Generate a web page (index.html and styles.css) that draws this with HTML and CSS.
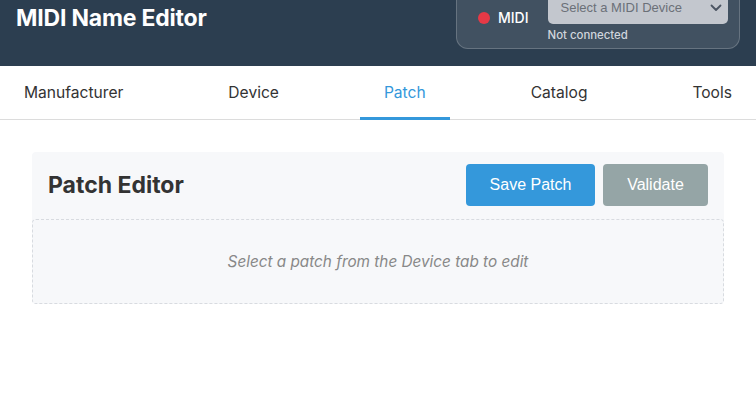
FILE: index.html
```html
<!DOCTYPE html>
<html>
<head>
<meta charset="utf-8">
<link rel="stylesheet" href="styles.css">
</head>
<body>
<header class="app-header">
  <h1 class="app-title">MIDI Name Editor</h1>
  <div class="midi-panel">
    <div class="midi-status">
      <span class="dot"></span>
      <span class="midi-label">MIDI</span>
    </div>
    <div class="midi-device">
      <div class="device-select">
        <span>Select a MIDI Device</span>
        <svg class="chev" width="12" height="8" viewBox="0 0 12 8"><path d="M1.5 1.5 L6 6 L10.5 1.5" fill="none" stroke="#4b5563" stroke-width="1.8" stroke-linecap="round" stroke-linejoin="round"/></svg>
      </div>
      <div class="conn">Not connected</div>
    </div>
  </div>
</header>
<nav class="tabs">
  <div class="tab">Manufacturer</div>
  <div class="tab">Device</div>
  <div class="tab active">Patch</div>
  <div class="tab">Catalog</div>
  <div class="tab">Tools</div>
</nav>
<main class="content">
  <section class="editor">
    <div class="editor-head">
      <h2 class="editor-title">Patch Editor</h2>
      <div class="actions">
        <button class="btn primary">Save Patch</button>
        <button class="btn secondary">Validate</button>
      </div>
    </div>
    <div class="empty">Select a patch from the Device tab to edit</div>
  </section>
</main>
</body>
</html>
```
FILE: styles.css
```css
* { box-sizing: border-box; }
body {
  margin: 0;
  font-family: Inter, "Noto Sans", sans-serif;
  color: #333;
  background: #fff;
  overflow: hidden;
}
.app-header {
  background: #2c3e50;
  height: 66px;
  display: flex;
  justify-content: space-between;
  align-items: flex-start;
  padding: 0 16px;
}
.app-title {
  margin: 0;
  color: #fff;
  font-size: 23px;
  font-weight: 700;
  line-height: 36px;
  letter-spacing: -0.2px;
}
.midi-panel {
  margin-top: -16px;
  height: 65px;
  width: 284px;
  background: rgba(255,255,255,0.1);
  border: 1px solid rgba(255,255,255,0.2);
  border-radius: 12px;
  display: flex;
  align-items: center;
  padding: 0 12px 0 21px;
  gap: 19px;
}
.midi-status {
  display: flex;
  align-items: center;
  gap: 8px;
  padding-top: 2px;
}
.dot {
  width: 12px;
  height: 12px;
  border-radius: 50%;
  background: #e63946;
}
.midi-label {
  color: #fff;
  font-size: 14px;
  font-weight: 500;
}
.midi-device {
  display: flex;
  flex-direction: column;
  gap: 4px;
  padding-top: 0;
}
.device-select {
  width: 180px;
  height: 32px;
  background: #c3c7ce;
  border-radius: 5px;
  display: flex;
  align-items: center;
  justify-content: space-between;
  padding: 0 6px 0 13px;
  font-family: "Liberation Sans", Arial, sans-serif;
  font-size: 13px;
  color: #6b7078;
}
.chev { display: block; }
.conn {
  color: #d0d5dc;
  font-size: 11.4px;
  font-weight: 500;
  line-height: 14px;
}
.tabs {
  display: flex;
  justify-content: space-between;
  border-bottom: 1px solid #dcdcdc;
}
.tab {
  padding: 16px 24px 14px;
  font-size: 15.6px;
  line-height: 21px;
  color: #333;
  border-bottom: 3px solid transparent;
  margin-bottom: -1px;
}
.tab.active {
  color: #3498db;
  border-bottom-color: #3498db;
}
.content {
  padding: 32px;
}
.editor {
  background: #f7f8fa;
  border-radius: 4px;
}
.editor-head {
  display: flex;
  justify-content: space-between;
  align-items: center;
  padding: 12px 16px 13px;
}
.editor-title {
  margin: 0;
  font-size: 23px;
  font-weight: 700;
  color: #333;
}
.actions {
  display: flex;
  gap: 8px;
}
.btn {
  border: none;
  border-radius: 4px;
  height: 42px;
  color: #fff;
  font-family: "Liberation Sans", Arial, sans-serif;
  font-size: 16px;
  padding: 0 20px;
}
.btn.primary { background: #3498db; width: 129px; }
.btn.secondary { background: #95a5a6; width: 105px; }
.empty {
  height: 85px;
  border: 1px dashed #d8dbe0;
  border-radius: 4px;
  display: flex;
  align-items: center;
  justify-content: center;
  font-style: italic;
  color: #888;
  font-size: 15.3px;
}
```
